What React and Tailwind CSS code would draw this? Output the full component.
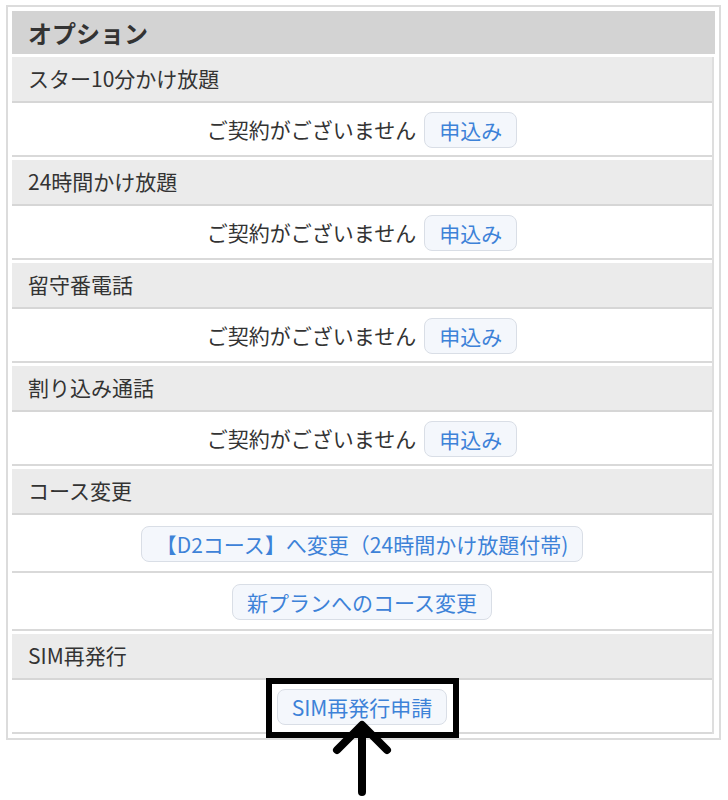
const rows = [
  { title: 'スター10分かけ放題', type: 'apply' },
  { title: '24時間かけ放題', type: 'apply' },
  { title: '留守番電話', type: 'apply' },
  { title: '割り込み通話', type: 'apply' },
  { title: 'コース変更', type: 'course' },
  { title: 'SIM再発行', type: 'sim' },
];

function Btn({ children }) {
  return (
    <button className="h-[36px] px-[14px] rounded-[8px] border border-[#d9dee6] bg-[#f4f7fc] text-[#3d82d8] text-[21px] leading-none">
      {children}
    </button>
  );
}

function Content({ tall, children }) {
  return (
    <div className={`${tall ? 'h-[56px]' : 'h-[52px]'} mt-[2px] border-b-2 border-[#d9d9d9] bg-white flex items-center justify-center gap-[8px]`}>
      {children}
    </div>
  );
}

export default function App() {
  return (
    <div className="relative w-[728px] h-[800px] bg-white text-[#333]" style={{ fontFamily: '"Noto Sans CJK JP", "Noto Sans", sans-serif' }}>
      <div className="absolute left-[6px] top-[5px] w-[715px] border-2 border-[#dcdcdc] p-[4px]">
        <div className="h-[43px] bg-[#d3d3d3] pl-[16px] flex items-center text-[24px] font-bold">オプション</div>
        <div className="mr-[1px] border-r-2 border-[#dedede]">
          {rows.map((r) => (
            <div key={r.title}>
              <div className="h-[46px] mt-[3px] bg-[#ebebeb] border-b-2 border-[#d6d6d6] pl-[16px] flex items-center text-[21px]">
                {r.title}
              </div>
              {r.type === 'apply' && (
                <Content>
                  <span className="text-[21px]">ご契約がございません</span>
                  <Btn>申込み</Btn>
                </Content>
              )}
              {r.type === 'course' && (
                <>
                  <Content tall>
                    <Btn>【D2コース】へ変更（24時間かけ放題付帯)</Btn>
                  </Content>
                  <div className="mt-[1px]">
                    <Content tall>
                      <Btn>新プランへのコース変更</Btn>
                    </Content>
                  </div>
                </>
              )}
              {r.type === 'sim' && (
                <Content>
                  <Btn>SIM再発行申請</Btn>
                </Content>
              )}
            </div>
          ))}
        </div>
      </div>
      <div className="absolute left-[266px] top-[678px] w-[193px] h-[60px] border-[6px] border-black" />
      <svg className="absolute left-[322px] top-[712px]" width="80" height="88" viewBox="0 0 80 88">
        <path d="M15 38 L40 13 L65 38 M40 15 L40 80" fill="none" stroke="black" strokeWidth="8" strokeLinecap="round" strokeLinejoin="round" />
      </svg>
    </div>
  );
}
